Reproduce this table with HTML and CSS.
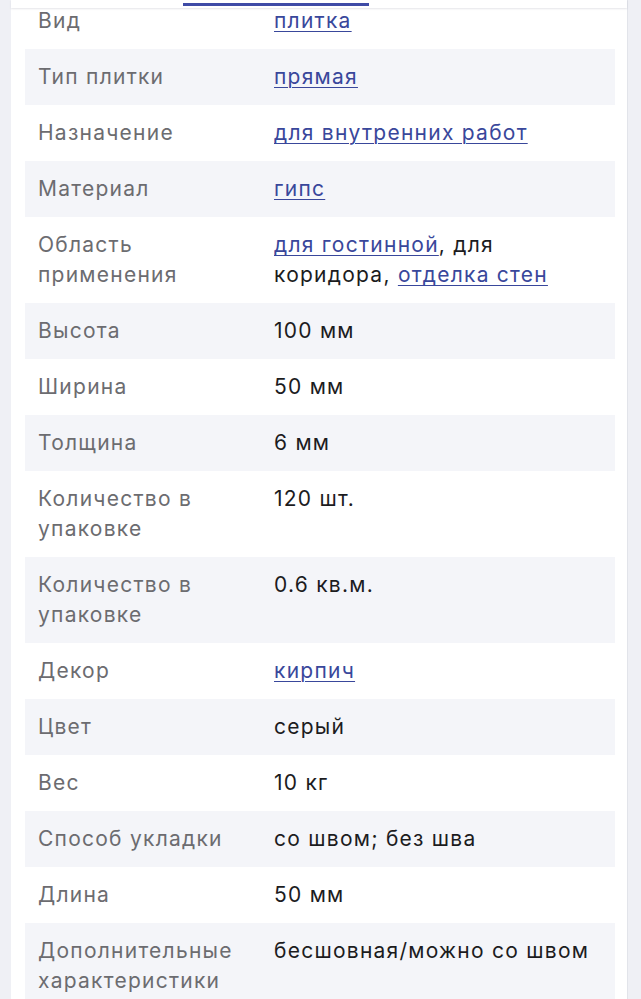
FILE: index.html
```html
<!DOCTYPE html>
<html lang="ru">
<head>
<meta charset="utf-8">
<title>Характеристики</title>
<link rel="stylesheet" href="styles.css">
</head>
<body>
<div class="page">
  <div class="card">
    <div class="tabs"><span class="tab-active"></span></div>
    <div class="specs">
      <div class="row"><div class="label">Вид</div><div class="value"><a href="#">плитка</a></div></div>
      <div class="row alt"><div class="label">Тип плитки</div><div class="value"><a href="#">прямая</a></div></div>
      <div class="row"><div class="label">Назначение</div><div class="value"><a href="#">для внутренних работ</a></div></div>
      <div class="row alt"><div class="label">Материал</div><div class="value"><a href="#">гипс</a></div></div>
      <div class="row"><div class="label">Область применения</div><div class="value"><a href="#">для гостинной</a>, для коридора, <a href="#">отделка стен</a></div></div>
      <div class="row alt"><div class="label">Высота</div><div class="value">100 мм</div></div>
      <div class="row"><div class="label">Ширина</div><div class="value">50 мм</div></div>
      <div class="row alt"><div class="label">Толщина</div><div class="value">6 мм</div></div>
      <div class="row"><div class="label">Количество в упаковке</div><div class="value">120 шт.</div></div>
      <div class="row alt"><div class="label">Количество в упаковке</div><div class="value">0.6 кв.м.</div></div>
      <div class="row"><div class="label">Декор</div><div class="value"><a href="#">кирпич</a></div></div>
      <div class="row alt"><div class="label">Цвет</div><div class="value">серый</div></div>
      <div class="row"><div class="label">Вес</div><div class="value">10 кг</div></div>
      <div class="row alt"><div class="label">Способ укладки</div><div class="value">со швом; без шва</div></div>
      <div class="row"><div class="label">Длина</div><div class="value">50 мм</div></div>
      <div class="row alt"><div class="label">Дополнительные характеристики</div><div class="value">бесшовная/можно со швом</div></div>
    </div>
  </div>
</div>
</body>
</html>
```
FILE: styles.css
```css
html, body {
  margin: 0;
  padding: 0;
  background: #eff0f5;
  font-family: Inter, "Noto Sans", sans-serif;
  overflow: hidden;
}
.page {
  padding: 0 13px 0 11px;
}
.card {
  background: #ffffff;
  border-right: 1px solid #e2e4ea;
  min-height: 1100px;
}
.tabs {
  position: fixed;
  top: 0;
  left: 11px;
  width: 616px;
  height: 8px;
  background: #ffffff;
  box-shadow: 0 1px 2px rgba(40, 45, 70, 0.12);
  z-index: 2;
}
.tab-active {
  position: absolute;
  left: 172px;
  top: 3px;
  width: 186px;
  height: 3px;
  background: #3f4ba6;
}
.specs {
  margin-top: -7px;
  padding: 0 12px 0 14px;
}
.row {
  display: flex;
  padding: 13px 0 13px 13px;
  line-height: 30px;
  font-size: 21px;
  letter-spacing: 1.25px;
}
.row.alt {
  background: #f4f5f9;
}
.label {
  width: 236px;
  flex: none;
  color: #6c6c70;
  padding-right: 14px;
  box-sizing: border-box;
}
.value {
  flex: 1;
  color: #1c1c1e;
  padding-right: 14px;
}
.value a {
  color: #39479b;
  text-decoration: underline;
  text-underline-offset: 3px;
  text-decoration-thickness: 1px;
}
```
